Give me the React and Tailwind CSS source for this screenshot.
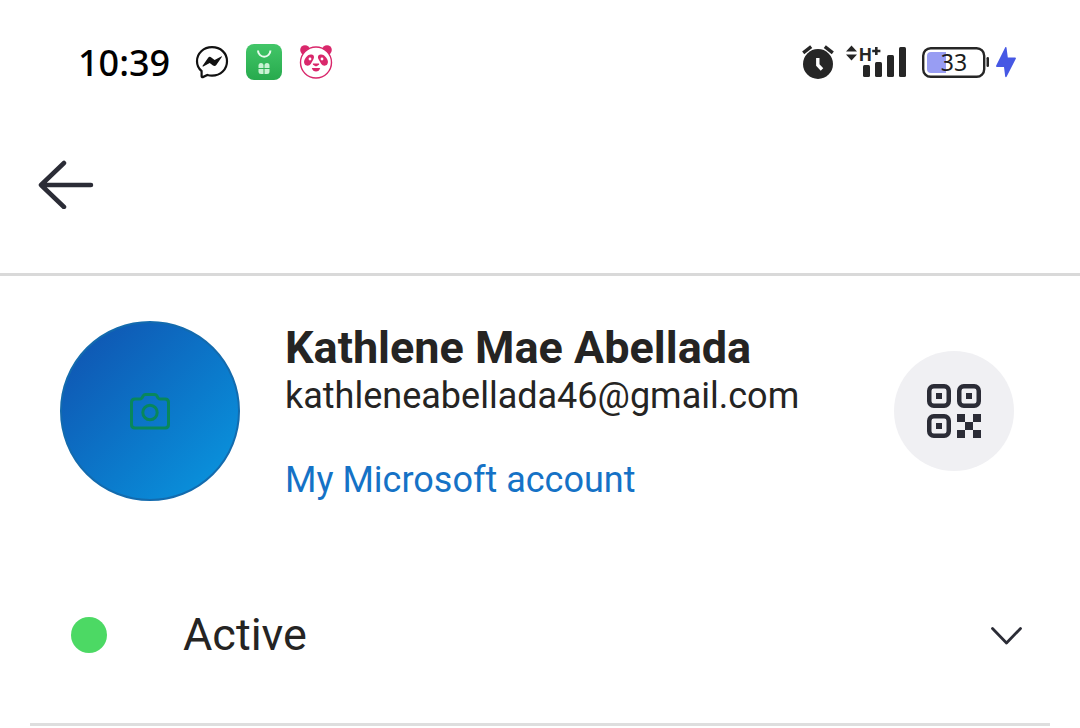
function MessengerIcon() {
  return (
    <svg className="h-[34px] w-[34px]" viewBox="0 0 34 34" fill="none" aria-hidden="true">
      <path
        d="M17 2.2C8.500 2.200 2 8.400 2 16.200c0 4.200 1.700 7.400 4.600 9.900v5.200c0 .7.6 1 1.200.8l4.600-2.100c1.600.5 2.900.7 4.600.7 8.600 0 15-6.300 15-14.500S25.600 2.200 17 2.200Z"
        stroke="#111"
        strokeWidth="2.2"
      />
      <path
        d="M7.600 20.700 13 12.900c.9-1.300 2.200-1.300 3.300-.5l3.300 2.600 6.600-3.600c.5-.2.9.2.6.7l-5.500 8c-.8 1.100-2.200 1.300-3.300.5l-3.300-2.500-6.400 3.300c-.6.300-1-.2-.7-.7Z"
        fill="#111"
      />
    </svg>
  );
}

function ShopIcon() {
  return (
    <svg className="h-9 w-9" viewBox="0 0 36 36" aria-hidden="true">
      <defs>
        <linearGradient id="shop" x1="0" y1="0" x2="0" y2="1">
          <stop offset="0" stopColor="#42c668" />
          <stop offset="1" stopColor="#27aa4d" />
        </linearGradient>
      </defs>
      <rect width="36" height="36" rx="8" fill="url(#shop)" />
      <path d="M12 6.5a6.200 6.200 0 0 0 12.400 0" fill="none" stroke="#eafbee" strokeWidth="2" />
      <g fill="#c9f2d3">
        <path d="M12.500 21.500a2.500 2.500 0 0 1 5 0v2.500h-5Z" />
        <path d="M18.500 21.500a2.500 2.500 0 0 1 5 0v2.500h-5Z" />
        <path d="M12.500 25h5v5H15a2.500 2.500 0 0 1-2.500-2.500Z" />
        <path d="M18.500 25h5v2.500A2.500 2.500 0 0 1 21 30h-2.500Z" />
      </g>
    </svg>
  );
}

function PandaIcon() {
  return (
    <svg className="h-9 w-9" viewBox="0 0 36 36" aria-hidden="true">
      <g fill="#d9276b">
        <circle cx="6" cy="6" r="4.800" />
        <circle cx="28" cy="6" r="4.800" />
      </g>
      <circle cx="17" cy="18.500" r="15.500" fill="#fff" stroke="#d9276b" strokeWidth="1.400" />
      <g fill="#d9276b">
        <path d="M12.500 10.500c2.500.3 3.200 2.500 1.800 5l-2.400 4.300c-1.500 2.400-4.700 2.600-6.200.5-1.300-2-.6-4.500 1-6.600 1.600-2.200 3.600-3.500 5.800-3.200Z" />
        <path d="M21.500 10.500c-2.500.3-3.200 2.500-1.800 5l2.400 4.300c1.500 2.400 4.700 2.600 6.200.5 1.300-2 .6-4.500-1-6.600-1.600-2.200-3.600-3.500-5.800-3.200Z" />
        <path d="M14.500 19.500h5c.8 0 1 .7.4 1.200l-1.900 1.300c-.6.4-1.400.4-2 0l-1.900-1.300c-.6-.5-.4-1.200.4-1.200Z" />
        <path d="M12.800 24h8.400c-.6 2.400-2.200 3.600-4.200 3.600s-3.600-1.200-4.200-3.600Z" />
      </g>
      <circle cx="11" cy="15" r="1.400" fill="#fff" />
      <circle cx="23" cy="15" r="1.400" fill="#fff" />
    </svg>
  );
}

function AlarmIcon() {
  return (
    <svg className="h-9 w-8" viewBox="0 0 32 36" fill="none" aria-hidden="true">
      <circle cx="16" cy="20" r="15" fill="#262626" />
      <path d="M1.200 8.800 9.200 2.600M30.800 8.800 22.800 2.600" stroke="#262626" strokeWidth="3.400" />
      <path d="M15.800 14v7l4.200 4.500" stroke="#fff" strokeWidth="3.400" />
    </svg>
  );
}

function SignalIcon() {
  return (
    <svg className="h-10 w-[60px]" viewBox="0 0 60 40" fill="#262626" aria-hidden="true">
      <path d="M5.500 3.500 11 9.500H0ZM5.500 18.500 0 12.500h11Z" />
      <text x="13" y="19" className="font-[Roboto] text-[18px] font-bold">H</text>
      <path d="M29 5h2.600v2.800h2.800v2.400h-2.800V13H29v-2.800h-2.800V7.800H29Z" />
      <rect x="17" y="23" width="7" height="12" rx="1.500" />
      <rect x="29" y="20" width="7" height="15" rx="1.500" />
      <rect x="41" y="13" width="7" height="22" rx="1.500" />
      <rect x="53" y="5" width="7" height="30" rx="1.500" />
    </svg>
  );
}

function BatteryIcon() {
  return (
    <svg className="h-9 w-[68px]" viewBox="0 0 68 36" role="img" aria-label="Battery">
      <rect x="1.200" y="4.200" width="61" height="28.600" rx="7.500" fill="none" stroke="#262626" strokeWidth="2.400" />
      <path d="M9 8h15v21H9a4 4 0 0 1-4-4V12a4 4 0 0 1 4-4Z" fill="#989df3" />
      <rect x="64.500" y="13" width="2.500" height="10" rx="1.200" fill="#262626" />
      <text x="32" y="27" textAnchor="middle" fill="#1c1c1c" className="font-['Noto_Sans'] text-[23px]">33</text>
    </svg>
  );
}

function BoltIcon() {
  return (
    <svg className="h-9 w-5" viewBox="0 0 20 36" fill="#4658e4" aria-hidden="true">
      <path d="M9.300 3.300c.2-.5 1.200-.4 1.200.3l1.300 9.900h7.200c.8 0 1.200.6.8 1.300l-9.200 18c-.3.6-1.300.5-1.400-.2L8 23H1c-.8 0-1.200-.6-.9-1.200Z" />
    </svg>
  );
}

function StatusBar() {
  return (
    <div className="flex h-[124px] items-center justify-between pr-16 pl-[78px]">
      <div className="flex items-center gap-[17px]">
        <time className="mr-2 pt-0.5 font-['Noto_Sans',sans-serif] text-[36px] leading-[44px] font-medium text-black">10:39</time>
        <MessengerIcon />
        <ShopIcon />
        <PandaIcon />
      </div>
      <div className="flex items-center">
        <AlarmIcon />
        <div className="ml-3 flex items-center gap-4">
          <SignalIcon />
          <BatteryIcon />
        </div>
        <div className="ml-1.5">
          <BoltIcon />
        </div>
      </div>
    </div>
  );
}

function Header() {
  return (
    <header className="border-b-3 border-[#d9d9d9] px-[38px] pt-9 pb-16">
      <button type="button" aria-label="Back" className="block">
        <svg className="h-[49px] w-14" viewBox="0 0 56 49" fill="none" stroke="#2b2c36" strokeWidth="4.500" strokeLinecap="round" strokeLinejoin="round">
          <path d="M26 3 3 25l23 22M3 25h50" />
        </svg>
      </button>
    </header>
  );
}

function Avatar() {
  return (
    <button
      type="button"
      aria-label="Change profile picture"
      className="flex size-[180px] shrink-0 items-center justify-center rounded-full border-2 border-[#136bae] bg-linear-135 from-[#0f5ab5] from-15% to-[#0a92dc] to-90% bg-origin-border"
    >
      <svg className="h-[38px] w-[42px]" viewBox="0 0 42 38" fill="none" stroke="#08875c" strokeWidth="3" strokeLinejoin="round">
        <path d="M6 7h5c1 0 1.600-.4 2.100-1.200l1.200-2.200c.5-.9 1.300-1.200 2.200-1.200h9c.9 0 1.700.3 2.200 1.200l1.200 2.200C29.400 6.600 30 7 31 7h5c2.200 0 3.500 1.300 3.500 3.500v22c0 2.200-1.300 3.500-3.500 3.500H6c-2.200 0-3.500-1.300-3.500-3.500v-22C2.500 8.300 3.800 7 6 7Z" />
        <circle cx="21" cy="20.500" r="7.200" />
      </svg>
    </button>
  );
}

function QrButton() {
  return (
    <button
      type="button"
      aria-label="Show QR code"
      className="flex size-[120px] shrink-0 items-center justify-center rounded-full bg-[#f0f0f3]"
    >
      <svg className="size-[54px]" viewBox="0 0 54 54" fill="#2b2c36">
        <g fill="none" stroke="#2b2c36" strokeWidth="4.500">
          <rect x="2.250" y="2.250" width="19.500" height="19.500" rx="4.500" />
          <rect x="32.250" y="2.250" width="19.500" height="19.500" rx="4.500" />
          <rect x="2.250" y="32.250" width="19.500" height="19.500" rx="4.500" />
        </g>
        <path d="M9 9h6v6H9zM39 9h6v6h-6zM9 39h6v6H9z" />
        <path d="M30 30h8v8h-8zM46 30h8v8h-8zM38 38h8v8h-8zM30 46h8v8h-8zM46 46h8v8h-8z" />
      </svg>
    </button>
  );
}

function Profile() {
  return (
    <section className="flex items-start pt-[45px] pr-[66px] pl-[60px]">
      <Avatar />
      <div className="ml-[45px] min-w-0 flex-1 pt-[3px]">
        <h1 className="text-[45px] leading-[48px] font-bold">Kathlene Mae Abellada</h1>
        <p className="text-[36px] leading-[48px]">kathleneabellada46@gmail.com</p>
        <a href="#" className="mt-9 block text-[36px] leading-[48px] text-[#1572c6]">
          My Microsoft account
        </a>
      </div>
      <div className="pt-[30px]">
        <QrButton />
      </div>
    </section>
  );
}

function StatusRow() {
  return (
    <div className="mx-[30px] mt-[43px] border-b-3 border-[#dedede]">
      <button type="button" className="flex h-44 w-full items-center pr-7 pl-[41px] text-left">
        <span className="size-9 rounded-full bg-[#4cd964]" />
        <span className="ml-[76px] flex-1 text-[45px] leading-[52px]">Active</span>
        <svg className="h-5 w-8" viewBox="0 0 32 20" fill="none" stroke="#2b2c36" strokeWidth="2.800" strokeLinecap="round" strokeLinejoin="round" aria-hidden="true">
          <path d="m2.500 3.500 14 14.500 14-14.500" />
        </svg>
      </button>
    </div>
  );
}

export default function App() {
  return (
    <main className="min-h-screen bg-white font-[Roboto,sans-serif] text-[#252423]">
      <StatusBar />
      <Header />
      <Profile />
      <StatusRow />
    </main>
  );
}
